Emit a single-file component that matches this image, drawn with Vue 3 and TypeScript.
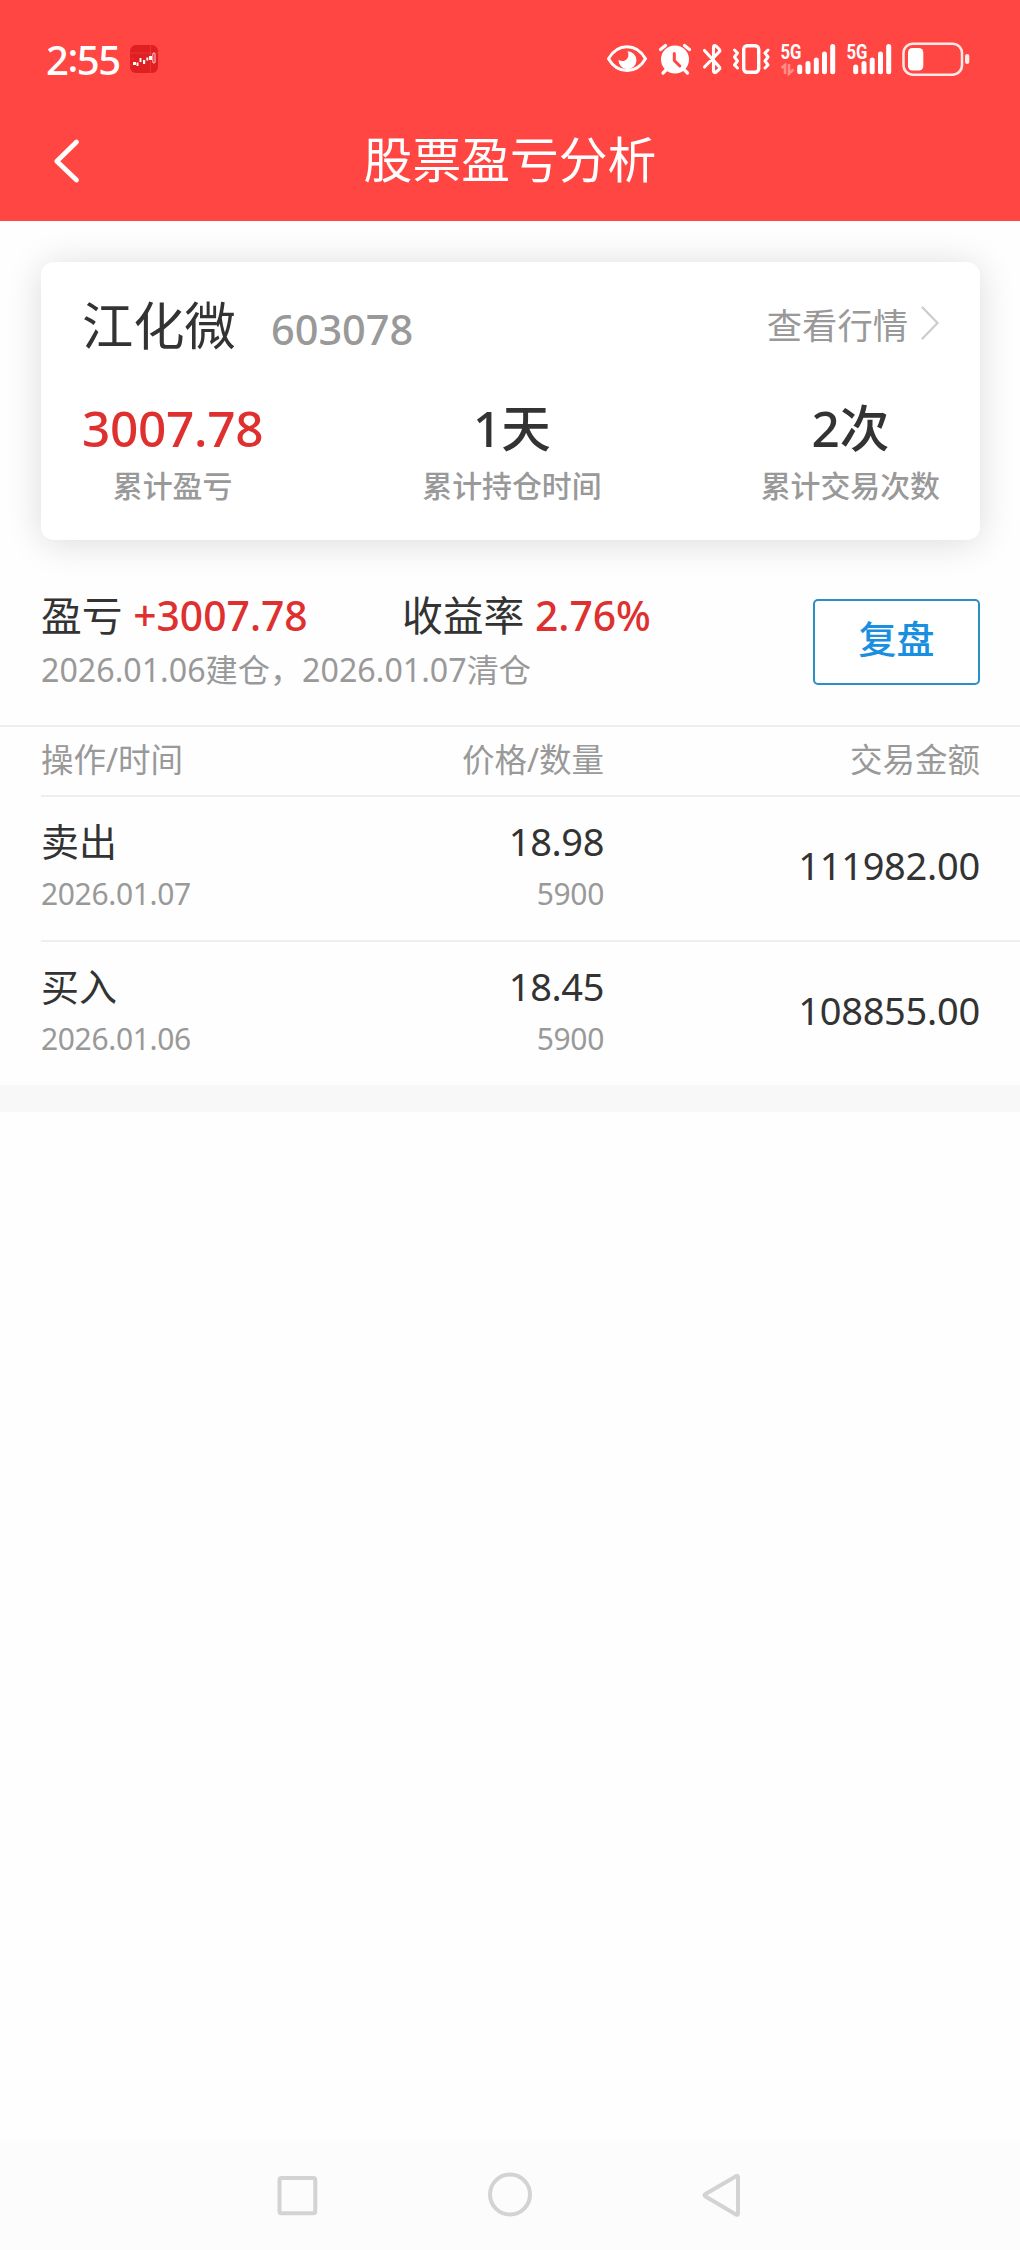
<script setup lang="ts">
interface Stat {
  value: string
  label: string
  tone?: string
}

interface Trade {
  action: string
  date: string
  price: string
  count: string
  amount: string
}

const stats: Stat[] = [
  { value: '3007.78', label: '累计盈亏', tone: 'profit' },
  { value: '1天', label: '累计持仓时间' },
  { value: '2次', label: '累计交易次数' },
]

const trades: Trade[] = [
  { action: '卖出', date: '2026.01.07', price: '18.98', count: '5900', amount: '111982.00' },
  { action: '买入', date: '2026.01.06', price: '18.45', count: '5900', amount: '108855.00' },
]
</script>

<template>
  <div class="page">
    <header class="top">
      <div class="status">
        <span class="clock">2<i>:</i>55</span>
        <svg class="app-badge" width="28" height="28" viewBox="0 0 28 28">
          <rect width="28" height="28" rx="6" fill="#e01f22" />
          <path d="M0 8h28M20.500 0v28M0 14h4M0 20h3" stroke="#f04a48" stroke-width=".5" />
          <path d="M3 17h3v3H3zM13 15h2.200v4H13zM19 11h3v4h-3z" fill="#fff" />
          <path d="M7.500 17.500v3.500M10.500 13v4M17.300 12.500v3" stroke="#fff" stroke-width="1.900" />
          <rect x="22.800" y="8" width="2.200" height="10" rx="1" fill="none" stroke="#fff" stroke-width=".8" />
        </svg>
        <div class="icons">
          <svg width="50" height="40" viewBox="604 40 50 40">
            <path d="M608.500 58.700C613 51 620 46.800 627 46.800s14 4.200 18.500 11.900C641 66.500 634 70.500 627 70.500s-14-4-18.500-11.800Z" fill="none" stroke="#fff" stroke-width="3" stroke-linejoin="round" />
            <path d="M627.500 51.300a9 9 0 1 1-9 8.500c2 1.300 4.500 1.700 6.500.7 3.500-1.700 4.300-6 2.500-9.200Z" fill="#fff" />
          </svg>
          <svg width="44" height="40" viewBox="654 40 44 40">
            <circle cx="675" cy="59.500" r="14" fill="#fff" />
            <path d="M660.500 49.500l5-4M689.500 49.500l-5-4M666 70l-3 3M684.500 70l3 3" stroke="#fff" stroke-width="3.200" stroke-linecap="round" />
            <path d="M674.300 53.500v7l5.500 5.500" fill="none" stroke="#ff4642" stroke-width="3" stroke-linecap="round" stroke-linejoin="round" />
          </svg>
          <svg width="30" height="40" viewBox="698 40 30 40">
            <path d="M704.500 50.500L719 66.500Q720.500 68 719 69.500L715.500 72.500Q713.500 73 713.500 70.500V47.500Q713.500 44.500 716 46L719 49Q720.500 50.500 719 52L704.500 67" fill="none" stroke="#fff" stroke-width="3.100" stroke-linecap="round" stroke-linejoin="round" />
          </svg>
          <svg width="48" height="40" viewBox="728 40 48 40">
            <rect x="743.700" y="45.700" width="15" height="26.600" rx="3.500" fill="none" stroke="#fff" stroke-width="3.400" />
            <path d="M734.500 50l3 3-3 4 3 4-3 4 3 3M768 50l-3 3 3 4-3 4 3 4-3 3" fill="none" stroke="#fff" stroke-width="3" stroke-linecap="round" stroke-linejoin="round" />
          </svg>
          <svg width="66" height="40" viewBox="776 40 66 40">
            <text class="net" x="780.500" y="58.500" textLength="21" lengthAdjust="spacingAndGlyphs">5G</text>
            <path d="M781.500 68l3.500-3v9M789 64v9.500l4.500-4" fill="none" stroke="#fff" stroke-opacity=".38" stroke-width="2.600" />
            <path d="M799.700 67v4.700M808 63.500v8.200M816.300 60v11.700M824.500 54v17.700M832.700 46.500v25.200" stroke="#fff" stroke-width="5" stroke-linecap="round" />
          </svg>
          <svg width="56" height="40" viewBox="842 40 56 40">
            <text class="net" x="846.500" y="58.500" textLength="21" lengthAdjust="spacingAndGlyphs">5G</text>
            <path d="M855.700 67v4.700M864 63.500v8.200M872.200 60v11.700M880.500 54v17.700M888.700 46.500v25.200" stroke="#fff" stroke-width="5" stroke-linecap="round" />
          </svg>
          <svg width="76" height="40" viewBox="898 40 76 40">
            <rect x="903.500" y="43.700" width="58.500" height="31" rx="9.500" fill="none" stroke="#ffe9e8" stroke-width="2.500" />
            <rect x="908" y="48" width="15.300" height="22.500" rx="4.500" fill="#fff" />
            <rect x="965" y="54" width="4.300" height="10" rx="2.100" fill="#ffe9e8" />
          </svg>
        </div>
      </div>
      <div class="titlebar">
        <svg class="back" width="32" height="50" viewBox="50 136 32 50">
          <path d="M76.500 142L56.800 161.200 76.500 180" fill="none" stroke="#fff" stroke-width="4.800" stroke-linecap="round" stroke-linejoin="round" />
        </svg>
        <h1>股票盈亏分析</h1>
      </div>
    </header>

    <section class="card">
      <div class="card-head">
        <span class="name">江化微</span>
        <span class="code">603078</span>
        <a class="quote">查看行情</a>
        <svg class="chevron" width="20" height="36" viewBox="0 0 20 36">
          <path d="M2.500 2.500L17.500 18 2.500 33.500" fill="none" stroke="#ccc" stroke-width="2.200" stroke-linecap="round" />
        </svg>
      </div>
      <div class="stats">
        <div v-for="s in stats" :key="s.label" class="stat">
          <b :class="s.tone">{{ s.value }}</b>
          <span>{{ s.label }}</span>
        </div>
      </div>
    </section>

    <section class="summary">
      <div class="summary-text">
        <div class="figures">
          <span class="fig first">盈亏 <b>+3007.78</b></span>
          <span class="fig">收益率 <b>2.76%</b></span>
        </div>
        <div class="period">2026.01.06建仓，2026.01.07清仓</div>
      </div>
      <button class="review">复盘</button>
    </section>

    <section class="table">
      <div class="thead">
        <span>操作/时间</span>
        <span>价格/数量</span>
        <span>交易金额</span>
      </div>
      <div v-for="t in trades" :key="t.date" class="row">
        <div class="cell">
          <span class="main">{{ t.action }}</span>
          <span class="sub">{{ t.date }}</span>
        </div>
        <div class="cell">
          <span class="main price">{{ t.price }}</span>
          <span class="sub">{{ t.count }}</span>
        </div>
        <div class="amount">{{ t.amount }}</div>
      </div>
    </section>
    <div class="band"></div>

    <nav class="nav">
      <svg width="48" height="48" viewBox="273 2171 48 48">
        <rect x="279.500" y="2178" width="35.800" height="35.300" rx="2" />
      </svg>
      <svg width="48" height="48" viewBox="486 2171 48 48">
        <circle cx="510" cy="2194.500" r="20" />
      </svg>
      <svg width="48" height="48" viewBox="698 2171 48 48">
        <path d="M736 2176.200Q738 2175 738 2177.500V2213Q738 2215.500 736 2214.500L705.500 2196.500Q703.500 2195.300 705.500 2194Z" />
      </svg>
    </nav>
  </div>
</template>

<style>
html,
body {
  margin: 0;
  background: #fff;
}
</style>

<style scoped>
.page {
  width: 1020px;
  height: 2250px;
  display: flex;
  flex-direction: column;
  background: #fefefe;
  color: #333;
  font-family: 'Noto Sans', 'Noto Sans CJK SC', sans-serif;
  overflow: hidden;
}

.top {
  height: 221px;
  flex: none;
  background: #ff4642;
  color: #fff;
}

.status {
  display: flex;
  align-items: flex-start;
  height: 100px;
  padding: 40px 46px 0 46px;
  box-sizing: border-box;
}

.clock {
  width: 84px;
  font-size: 40px;
  line-height: 39px;
  font-weight: 500;
  letter-spacing: -1.500px;
  white-space: nowrap;
}

.clock i {
  font-style: normal;
  position: relative;
  top: -3px;
}

.app-badge {
  margin-top: 5px;
}

.icons {
  display: flex;
  margin-left: auto;
}

.icons svg,
.nav svg {
  display: block;
}

.net {
  font-family: Roboto, sans-serif;
  font-size: 20px;
  font-weight: 700;
  fill: #fff;
}

.titlebar {
  display: flex;
  align-items: center;
  height: 121px;
  padding: 0 50px;
}

.back {
  margin-top: 1px;
}

h1 {
  flex: 1;
  margin: 0 32px 4px 0;
  text-align: center;
  font-size: 48.800px;
  line-height: 60px;
  font-weight: 400;
}

.card {
  flex: none;
  height: 278px;
  margin: 41px 40px 0 41px;
  padding: 0 40px 0 41px;
  box-sizing: border-box;
  border-radius: 13px;
  background: #fff;
  box-shadow: 0 3px 36px rgba(0, 0, 0, 0.14);
}

.card-head {
  display: flex;
  align-items: baseline;
  height: 130px;
  line-height: 126px;
  white-space: nowrap;
}

.name {
  font-size: 51.300px;
}

.code {
  margin-left: 35px;
  font-size: 41.500px;
  font-weight: 500;
  color: #999;
}

.quote {
  margin-left: auto;
  position: relative;
  top: -6px;
  font-size: 35.300px;
  color: #999;
}

.chevron {
  align-self: flex-start;
  margin: 43px 0 0 12px;
}

.stats {
  display: flex;
  justify-content: space-between;
}

.stat {
  display: flex;
  flex-direction: column;
  align-items: center;
  color: #999;
  font-size: 29.900px;
  font-weight: 500;
  line-height: 44px;
}

.stat b {
  color: #333;
  font-size: 49.500px;
  line-height: 72px;
  font-weight: 500;
}

.stat b.profit {
  color: #df3030;
  letter-spacing: -0.300px;
}

.summary {
  display: flex;
  height: 185px;
  flex: none;
  padding: 0 40px 0 41px;
  border-bottom: 2px solid #eee;
}

.summary-text {
  flex: 1;
  padding-top: 47px;
  white-space: nowrap;
}

.figures {
  display: flex;
  font-size: 40.800px;
  line-height: 56px;
}

.first {
  width: 361px;
}

.fig b {
  font-weight: 500;
  color: #df3030;
}

.period {
  font-size: 32.200px;
  line-height: 54px;
  color: #999;
}

.review {
  width: 167px;
  height: 86px;
  margin: 59px 0 0;
  padding: 0 0 8px;
  box-sizing: border-box;
  border: 2px solid #2b8fc4;
  border-radius: 5px;
  background: #fff;
  color: #188fe0;
  font: 500 38px / 60px 'Noto Sans', 'Noto Sans CJK SC', sans-serif;
}

.table {
  flex: none;
  padding-left: 41px;
}

.thead,
.row {
  display: grid;
  grid-template-columns: 300px 263px 1fr;
  padding-right: 40px;
}

.thead {
  height: 68px;
  line-height: 66px;
  font-size: 32.500px;
  color: #999;
}

.thead span:nth-child(n + 2),
.cell:nth-child(2),
.amount {
  text-align: right;
}

.row {
  height: 143px;
  border-top: 2px solid #eee;
}

.cell {
  display: flex;
  flex-direction: column;
  padding-top: 18px;
}

.main {
  font-size: 38px;
  line-height: 53px;
}

.price {
  letter-spacing: -0.400px;
}

.sub {
  font-size: 30px;
  line-height: 52px;
  letter-spacing: -0.350px;
  color: #999;
}

.amount {
  font-size: 38px;
  line-height: 136px;
  letter-spacing: -0.250px;
}

.band {
  flex: none;
  height: 27px;
  background: #f8f8f8;
}

.nav {
  display: flex;
  justify-content: space-between;
  height: 110px;
  margin-top: auto;
  padding: 31px 274px 0 273px;
  box-sizing: border-box;
  background: #fcfcfc;
}

.nav svg {
  fill: none;
  stroke: #d3d3d3;
  stroke-width: 4;
}
</style>
